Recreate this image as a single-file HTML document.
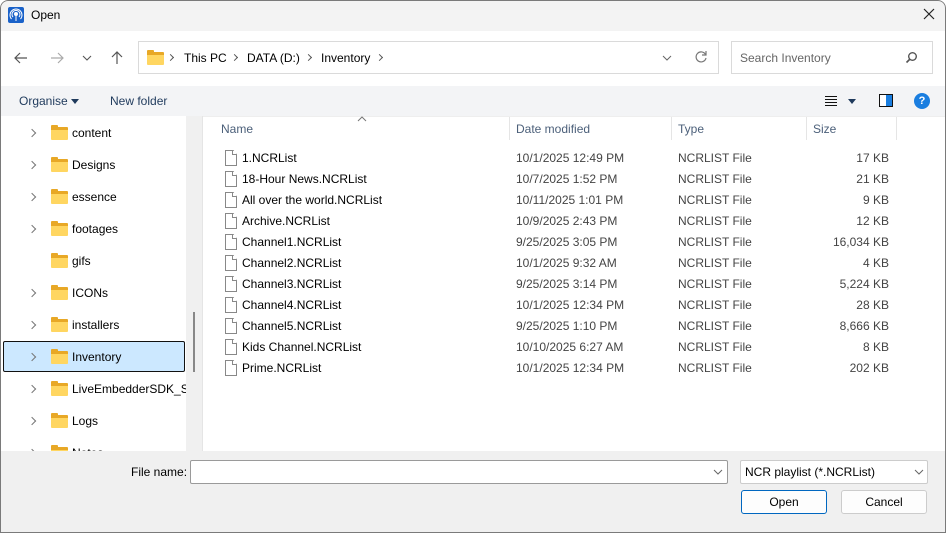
<!DOCTYPE html>
<html><head><meta charset="utf-8"><style>
*{margin:0;padding:0;box-sizing:border-box}
body{width:946px;height:533px;overflow:hidden;font-family:"Liberation Sans",sans-serif;font-size:12px;color:#000;background:#fff;position:relative}
.a{position:absolute}
.win{position:absolute;left:0;top:0;width:946px;height:533px;border-radius:8px 8px 0 0;overflow:hidden;background:#fff}
.fold{position:absolute;width:17px;height:13px;background:#ffd661;border-radius:1px;border-top:3px solid #e8a826}
.fold:before{content:"";position:absolute;left:0;top:-5px;width:7px;height:3px;background:#e8a826;border-radius:1px 1px 0 0}
.chev{position:absolute;width:6px;height:6px;border-right:1.5px solid #777;border-top:1.5px solid #777;transform:rotate(45deg)}
.doc{position:absolute;width:12px;height:16px;border:1px solid #888;background:#fff;clip-path:polygon(0 0,70% 0,100% 28%,100% 100%,0 100%)}
.doc:after{content:"";position:absolute;right:-1px;top:-1px;width:4px;height:4px;border-left:1px solid #888;border-bottom:1px solid #888}
.row{position:absolute;left:0;height:21px;line-height:21px;width:946px}
.row span{position:absolute;color:#000}
.row .g{color:#444}
.hd{position:absolute;top:122px;color:#4c607a}
.vl{position:absolute;top:117px;width:1px;height:23px;background:#e5e5e5}
</style></head><body><div class="win">
<div class="a" style="left:0;top:0;width:946px;height:31px;background:#f3f3f3"></div>
<div class="a" style="left:8px;top:7px;width:16px;height:16px;background:#1a62c9;border-radius:2px"></div>
<svg class="a" style="left:8px;top:7px" width="16" height="16"><circle cx="8" cy="7" r="2" fill="#fff"/><path d="M5 10a4 4 0 1 1 6 0M3.5 12a6 6 0 1 1 9 0" stroke="#fff" fill="none" stroke-width="1"/><path d="M8 9v5" stroke="#fff"/></svg>
<div class="a" style="left:31px;top:8px;font-size:12px">Open</div>
<svg class="a" style="left:923px;top:8px" width="12" height="12"><path d="M1 1L11 11M11 1L1 11" stroke="#222" stroke-width="1.2"/></svg>
<svg class="a" style="left:13px;top:50px" width="16" height="16"><path d="M14 8H2M7 3L2 8l5 5" stroke="#555" fill="none" stroke-width="1.2"/></svg>
<svg class="a" style="left:49px;top:50px" width="16" height="16"><path d="M2 8h12M9 3l5 5-5 5" stroke="#aaa" fill="none" stroke-width="1.2"/></svg>
<svg class="a" style="left:82px;top:54px" width="10" height="8"><path d="M1 2l4 4 4-4" stroke="#555" fill="none" stroke-width="1.1"/></svg>
<svg class="a" style="left:109px;top:50px" width="16" height="16"><path d="M8 14V2M3 7l5-5 5 5" stroke="#555" fill="none" stroke-width="1.2"/></svg>
<div class="a" style="left:138px;top:41px;width:581px;height:33px;border:1px solid #dadada;background:#fff"></div>
<div class="fold" style="left:147px;top:52px"></div>
<div class="chev" style="left:168px;top:55px;width:5px;height:5px;border-color:#555"></div>
<div class="a" style="left:184px;top:51px">This PC</div>
<div class="chev" style="left:232px;top:55px;width:5px;height:5px;border-color:#555"></div>
<div class="a" style="left:247px;top:51px">DATA (D:)</div>
<div class="chev" style="left:306px;top:55px;width:5px;height:5px;border-color:#555"></div>
<div class="a" style="left:321px;top:51px">Inventory</div>
<div class="chev" style="left:377px;top:55px;width:5px;height:5px;border-color:#555"></div>
<svg class="a" style="left:662px;top:54px" width="10" height="8"><path d="M1 2l4 4 4-4" stroke="#666" fill="none" stroke-width="1"/></svg>
<svg class="a" style="left:694px;top:50px" width="14" height="14"><path d="M11.5 4.5A5 5 0 1 0 12 8" stroke="#777" fill="none" stroke-width="1.2"/><path d="M12 1v4H8" stroke="#777" fill="none" stroke-width="1.2"/></svg>
<div class="a" style="left:731px;top:41px;width:202px;height:33px;border:1px solid #dadada;background:#fff"></div>
<div class="a" style="left:740px;top:51px;color:#666">Search Inventory</div>
<svg class="a" style="left:905px;top:51px" width="13" height="13"><circle cx="7.5" cy="5.5" r="3.8" stroke="#555" fill="none" stroke-width="1.4"/><path d="M5 8L1.5 11.5" stroke="#555" stroke-width="1.6"/></svg>
<div class="a" style="left:0;top:86px;width:946px;height:30px;background:#f3f4f6"></div>
<div class="a" style="left:19px;top:94px;color:#1f3a5c">Organise</div>
<div class="a" style="left:71px;top:99px;width:0;height:0;border-left:4px solid transparent;border-right:4px solid transparent;border-top:5px solid #1f3a5c"></div>
<div class="a" style="left:110px;top:94px;color:#1f3a5c">New folder</div>
<svg class="a" style="left:824px;top:95px" width="14" height="12"><path d="M1 1.5h12M1 4.5h12M1 7.5h12M1 10.5h12" stroke="#111" stroke-width="1"/></svg>
<div class="a" style="left:848px;top:99px;width:0;height:0;border-left:4px solid transparent;border-right:4px solid transparent;border-top:5px solid #1f3a5c"></div>
<div class="a" style="left:879px;top:94px;width:14px;height:13px;border:1.5px solid #111;background:linear-gradient(90deg,#fff 50%,#1a7ee0 50%)"></div>
<div class="a" style="left:914px;top:93px;width:16px;height:16px;border-radius:50%;background:#1a7ee0;color:#fff;font-weight:bold;font-size:11px;text-align:center;line-height:16px">?</div>
<div class="a" style="left:186px;top:116px;width:16px;height:335px;background:#f0f0f0"></div>
<div class="a" style="left:193px;top:312px;width:2px;height:60px;background:#888"></div>
<div class="a" style="left:202px;top:116px;width:1px;height:335px;background:#e5e5e5"></div>
<div class="a" style="left:3px;top:341px;width:182px;height:31px;background:#cce8ff;border:1px solid #111;border-radius:2px"></div>
<div class="a" style="left:0;top:116px;width:186px;height:335px;overflow:hidden">
<div class="chev" style="left:29px;top:14px"></div><div class="fold" style="left:51px;top:11px"></div><div class="a" style="left:72px;top:10px">content</div>
<div class="chev" style="left:29px;top:46px"></div><div class="fold" style="left:51px;top:43px"></div><div class="a" style="left:72px;top:42px">Designs</div>
<div class="chev" style="left:29px;top:78px"></div><div class="fold" style="left:51px;top:75px"></div><div class="a" style="left:72px;top:74px">essence</div>
<div class="chev" style="left:29px;top:110px"></div><div class="fold" style="left:51px;top:107px"></div><div class="a" style="left:72px;top:106px">footages</div>
<div class="fold" style="left:51px;top:139px"></div><div class="a" style="left:72px;top:138px">gifs</div>
<div class="chev" style="left:29px;top:174px"></div><div class="fold" style="left:51px;top:171px"></div><div class="a" style="left:72px;top:170px">ICONs</div>
<div class="chev" style="left:29px;top:206px"></div><div class="fold" style="left:51px;top:203px"></div><div class="a" style="left:72px;top:202px">installers</div>
<div class="chev" style="left:29px;top:238px"></div><div class="fold" style="left:51px;top:235px"></div><div class="a" style="left:72px;top:234px">Inventory</div>
<div class="chev" style="left:29px;top:270px"></div><div class="fold" style="left:51px;top:267px"></div><div class="a" style="left:72px;top:266px;white-space:nowrap">LiveEmbedderSDK_Sn</div>
<div class="chev" style="left:29px;top:302px"></div><div class="fold" style="left:51px;top:299px"></div><div class="a" style="left:72px;top:298px">Logs</div>
<div class="chev" style="left:29px;top:334px"></div><div class="fold" style="left:51px;top:331px"></div><div class="a" style="left:72px;top:330px">Notes</div>
</div>
<div class="a" style="left:203px;top:116px;width:743px;height:1px;background:#eee"></div>
<svg class="a" style="left:357px;top:116px" width="10" height="6"><path d="M1 5l4-4 4 4" stroke="#777" fill="none"/></svg>
<div class="hd" style="left:221px">Name</div>
<div class="vl" style="left:509px"></div><div class="hd" style="left:516px">Date modified</div>
<div class="vl" style="left:671px"></div><div class="hd" style="left:678px">Type</div>
<div class="vl" style="left:806px"></div><div class="hd" style="left:813px">Size</div>
<div class="vl" style="left:896px"></div>
<div class="row" style="top:148px"><div class="doc" style="left:225px;top:2px"></div><span style="left:242px">1.NCRList</span><span class="g" style="left:516px">10/1/2025 12:49 PM</span><span class="g" style="left:678px">NCRLIST File</span><span class="g" style="right:57px">17 KB</span></div>
<div class="row" style="top:169px"><div class="doc" style="left:225px;top:2px"></div><span style="left:242px">18-Hour News.NCRList</span><span class="g" style="left:516px">10/7/2025 1:52 PM</span><span class="g" style="left:678px">NCRLIST File</span><span class="g" style="right:57px">21 KB</span></div>
<div class="row" style="top:190px"><div class="doc" style="left:225px;top:2px"></div><span style="left:242px">All over the world.NCRList</span><span class="g" style="left:516px">10/11/2025 1:01 PM</span><span class="g" style="left:678px">NCRLIST File</span><span class="g" style="right:57px">9 KB</span></div>
<div class="row" style="top:211px"><div class="doc" style="left:225px;top:2px"></div><span style="left:242px">Archive.NCRList</span><span class="g" style="left:516px">10/9/2025 2:43 PM</span><span class="g" style="left:678px">NCRLIST File</span><span class="g" style="right:57px">12 KB</span></div>
<div class="row" style="top:232px"><div class="doc" style="left:225px;top:2px"></div><span style="left:242px">Channel1.NCRList</span><span class="g" style="left:516px">9/25/2025 3:05 PM</span><span class="g" style="left:678px">NCRLIST File</span><span class="g" style="right:57px">16,034 KB</span></div>
<div class="row" style="top:253px"><div class="doc" style="left:225px;top:2px"></div><span style="left:242px">Channel2.NCRList</span><span class="g" style="left:516px">10/1/2025 9:32 AM</span><span class="g" style="left:678px">NCRLIST File</span><span class="g" style="right:57px">4 KB</span></div>
<div class="row" style="top:274px"><div class="doc" style="left:225px;top:2px"></div><span style="left:242px">Channel3.NCRList</span><span class="g" style="left:516px">9/25/2025 3:14 PM</span><span class="g" style="left:678px">NCRLIST File</span><span class="g" style="right:57px">5,224 KB</span></div>
<div class="row" style="top:295px"><div class="doc" style="left:225px;top:2px"></div><span style="left:242px">Channel4.NCRList</span><span class="g" style="left:516px">10/1/2025 12:34 PM</span><span class="g" style="left:678px">NCRLIST File</span><span class="g" style="right:57px">28 KB</span></div>
<div class="row" style="top:316px"><div class="doc" style="left:225px;top:2px"></div><span style="left:242px">Channel5.NCRList</span><span class="g" style="left:516px">9/25/2025 1:10 PM</span><span class="g" style="left:678px">NCRLIST File</span><span class="g" style="right:57px">8,666 KB</span></div>
<div class="row" style="top:337px"><div class="doc" style="left:225px;top:2px"></div><span style="left:242px">Kids Channel.NCRList</span><span class="g" style="left:516px">10/10/2025 6:27 AM</span><span class="g" style="left:678px">NCRLIST File</span><span class="g" style="right:57px">8 KB</span></div>
<div class="row" style="top:358px"><div class="doc" style="left:225px;top:2px"></div><span style="left:242px">Prime.NCRList</span><span class="g" style="left:516px">10/1/2025 12:34 PM</span><span class="g" style="left:678px">NCRLIST File</span><span class="g" style="right:57px">202 KB</span></div>
<div class="a" style="left:0;top:451px;width:946px;height:82px;background:#f0f0f0"></div>
<div class="a" style="left:131px;top:465px">File name:</div>
<div class="a" style="left:190px;top:460px;width:538px;height:24px;background:#fff;border:1px solid #9a9a9a;border-radius:2px"></div>
<svg class="a" style="left:713px;top:468px" width="10" height="8"><path d="M1 2l4 4 4-4" stroke="#666" fill="none"/></svg>
<div class="a" style="left:740px;top:460px;width:188px;height:24px;background:#fff;border:1px solid #ccc;border-radius:2px"></div>
<div class="a" style="left:745px;top:465px">NCR playlist (*.NCRList)</div>
<svg class="a" style="left:914px;top:468px" width="10" height="8"><path d="M1 2l4 4 4-4" stroke="#666" fill="none"/></svg>
<div class="a" style="left:741px;top:490px;width:86px;height:24px;background:#fdfdfd;border:1px solid #0067c0;border-radius:3px;text-align:center;line-height:22px">Open</div>
<div class="a" style="left:841px;top:490px;width:86px;height:24px;background:#fdfdfd;border:1px solid #ccc;border-radius:3px;text-align:center;line-height:22px">Cancel</div>
<div class="a" style="left:0;top:0;width:946px;height:533px;border:1px solid #7a7a7a;border-radius:8px 8px 0 0"></div>
</div></body></html>
